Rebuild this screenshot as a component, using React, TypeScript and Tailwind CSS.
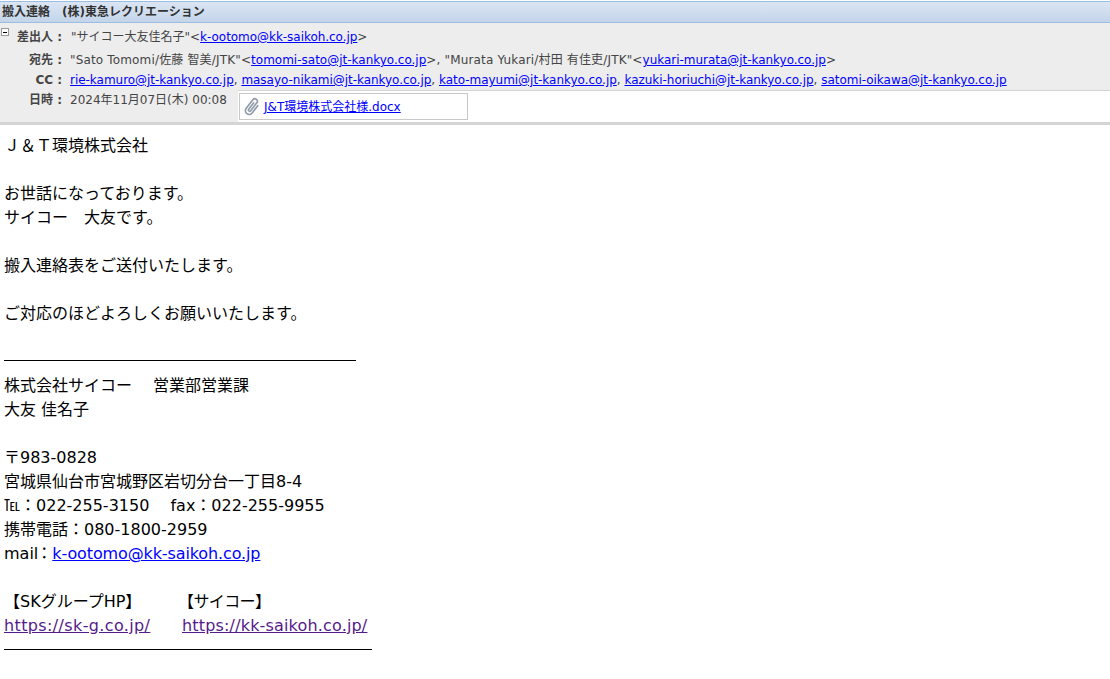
const font = "font-['DejaVu_Sans','Noto_Sans_CJK_JP',sans-serif]";

function Mail({ href, className }: { href: string; className?: string }) {
  return (
    <a href={'mailto:' + href} className={'text-[#0000ff] underline ' + (className ?? '')}>
      {href}
    </a>
  );
}

function HeaderRow({ label, children, className }: { label: string; children: React.ReactNode; className?: string }) {
  return (
    <div className={'flex items-center whitespace-nowrap ' + (className ?? '')}>
      <div className="w-[63px] shrink-0 text-right font-bold text-[#444] pr-[1px]">{label}&nbsp;:</div>
      <div className="pl-[7px] text-[#444]">{children}</div>
    </div>
  );
}

function PaperClip() {
  return (
    <svg width="20" height="20" viewBox="0 0 24 24" fill="none" stroke="#8f9aa8" strokeWidth="2" strokeLinecap="round" strokeLinejoin="round">
      <path transform="rotate(38 12 12)" d="M16.5 6.5v11a4.5 4.5 0 0 1-9 0V4.5a3 3 0 0 1 6 0v12a1.5 1.5 0 0 1-3 0V7" />
    </svg>
  );
}

const cc = [
  'rie-kamuro@jt-kankyo.co.jp',
  'masayo-nikami@jt-kankyo.co.jp',
  'kato-mayumi@jt-kankyo.co.jp',
  'kazuki-horiuchi@jt-kankyo.co.jp',
  'satomi-oikawa@jt-kankyo.co.jp',
];

export default function App() {
  return (
    <div className={'w-[1110px] h-[679px] overflow-hidden bg-white text-black ' + font}>
      {/* title bar */}
      <div className="mt-[1px] h-[22px] border-y border-[#9dbde0] bg-gradient-to-b from-[#dbe5f3] to-[#c3d5ea] flex items-center pl-[2px] text-[12px] font-bold text-[#333] whitespace-nowrap">
        搬入連絡　(株)東急レクリエーション
      </div>

      {/* mail header */}
      <div className="relative bg-[#ededed] text-[12px] leading-[20px] border-b-[3px] border-[#d4d4d4]">
        <div className="absolute left-[1px] top-[5px] w-[8px] h-[8px] border border-[#999] bg-white flex items-center justify-center">
          <div className="w-[4px] h-[1px] bg-black" />
        </div>
        <div className="pt-[4px]">
          <HeaderRow label="差出人" className="h-[20px]">
            <span className="ml-[1px]">"サイコー大友佳名子"&lt;<Mail href="k-ootomo@kk-saikoh.co.jp" className="tracking-[-0.04px]" />&gt;</span>
          </HeaderRow>
        </div>
        <HeaderRow label="宛先" className="h-[20px] mt-[3px]">
          <span className="tracking-[0.16px]">"Sato Tomomi/佐藤 智美/JTK"&lt;</span>
          <Mail href="tomomi-sato@jt-kankyo.co.jp" />
          <span className="tracking-[0.16px]">&gt;, "Murata Yukari/村田 有佳吏/JTK"&lt;</span>
          <Mail href="yukari-murata@jt-kankyo.co.jp" className="tracking-[-0.03px]" />&gt;
        </HeaderRow>
        <HeaderRow label="CC" className="h-[20px]">
          {cc.map((m, i) => (
            <span key={m}>
              {i > 0 && ', '}
              <Mail href={m} className="tracking-[-0.03px]" />
            </span>
          ))}
        </HeaderRow>
        <div className="flex h-[32px]">
          <div className="w-[238px] shrink-0">
            <HeaderRow label="日時" className="h-[20px]">
              2024年11月07日(木) 00:08
            </HeaderRow>
          </div>
          <div className="flex-1 bg-white border-t border-[#d4d4d4] pl-[1px] pt-[2px]">
            <div className="w-[229px] h-[27px] border border-[#c8c8c8] flex items-center pl-[2px] gap-[2px] whitespace-nowrap">
              <PaperClip />
              <a href="#" className="text-[#0000ff] underline">J&amp;T環境株式会社様.docx</a>
            </div>
          </div>
        </div>
      </div>

      {/* body */}
      <div className="pt-[9px] pl-[4px] text-[16px] leading-[24px] whitespace-pre">
        <div>Ｊ＆Ｔ環境株式会社</div>
        <div className="h-[24px]" />
        <div>お世話になっております。</div>
        <div>サイコー　大友です。</div>
        <div className="h-[24px]" />
        <div>搬入連絡表をご送付いたします。</div>
        <div className="h-[24px]" />
        <div>ご対応のほどよろしくお願いいたします。</div>
        <div className="h-[35px] w-[352px] border-b border-black" />
        <div className="mt-[13px]">株式会社サイコー　 営業部営業課</div>
        <div>大友 佳名子</div>
        <div className="h-[24px]" />
        <div>〒983-0828</div>
        <div>宮城県仙台市宮城野区岩切分台一丁目8-4</div>
        <div><span className="font-['Noto_Sans_CJK_JP'] leading-[0]">℡</span>：022-255-3150　 fax：022-255-9955</div>
        <div>携帯電話：080-1800-2959</div>
        <div>mail<span className="-ml-[2px]">：</span><a href="#" className="text-[#0000ff] underline tracking-[-0.12px]">k-ootomo@kk-saikoh.co.jp</a></div>
        <div className="h-[24px]" />
        <div className="flex">
          <div className="w-[174px]">【SKグループHP】</div>
          <div className="tracking-[-0.6px]">【サイコー】</div>
        </div>
        <div className="flex">
          <div className="w-[178px]"><a href="#" className="text-[#551a8b] underline tracking-[0.37px]">https://sk-g.co.jp/</a></div>
          <a href="#" className="text-[#551a8b] underline tracking-[0.17px]">https://kk-saikoh.co.jp/</a>
        </div>
        <div className="h-[12px] w-[368px] border-b border-black" />
      </div>
    </div>
  );
}
